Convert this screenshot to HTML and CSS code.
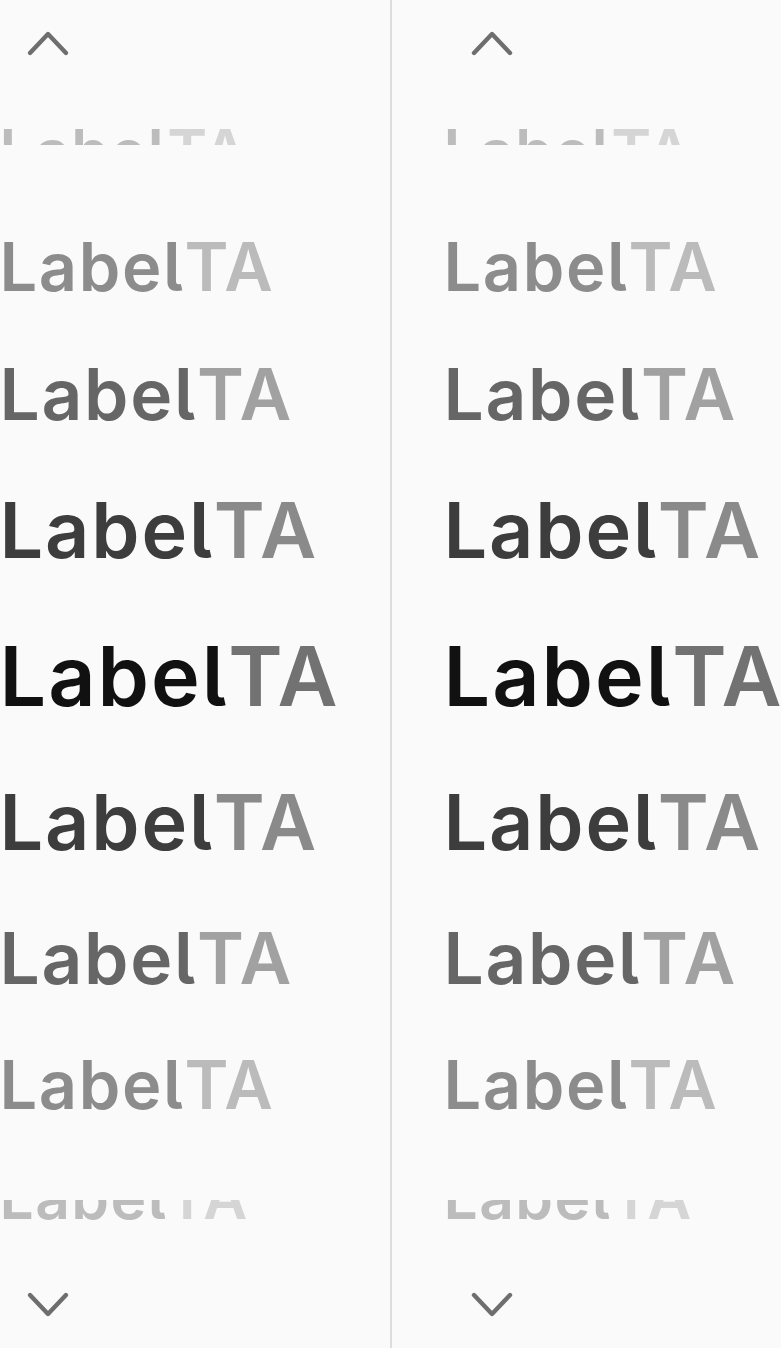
FILE: index.html
```html
<!DOCTYPE html>
<html lang="en">
<head>
<meta charset="utf-8">
<title>Picker</title>
<link rel="stylesheet" href="styles.css">
</head>
<body>
<div class="stage">
  <div class="picker">
    <div class="col">
      <div class="head">
        <svg class="chev" width="44" height="28" viewBox="0 0 44 28"><polyline points="4,23 22,4 40,23"/></svg>
      </div>
      <div class="edge edge-top">
        <div class="row r0">Label<span class="ta">TA</span></div>
      </div>
      <div class="wheel">
        <div class="row r1">Label<span class="ta">TA</span></div>
        <div class="row r2">Label<span class="ta">TA</span></div>
        <div class="row r3">Label<span class="ta">TA</span></div>
        <div class="row r4">Label<span class="ta">TA</span></div>
        <div class="row r3">Label<span class="ta">TA</span></div>
        <div class="row r2">Label<span class="ta">TA</span></div>
        <div class="row r1">Label<span class="ta">TA</span></div>
      </div>
      <div class="edge edge-bottom">
        <div class="row r0">Label<span class="ta">TA</span></div>
      </div>
      <div class="foot">
        <svg class="chev" width="44" height="28" viewBox="0 0 44 28"><polyline points="4,4 22,23 40,4"/></svg>
      </div>
    </div>
    <div class="divider"></div>
    <div class="col">
      <div class="head">
        <svg class="chev" width="44" height="28" viewBox="0 0 44 28"><polyline points="4,23 22,4 40,23"/></svg>
      </div>
      <div class="edge edge-top">
        <div class="row r0">Label<span class="ta">TA</span></div>
      </div>
      <div class="wheel">
        <div class="row r1">Label<span class="ta">TA</span></div>
        <div class="row r2">Label<span class="ta">TA</span></div>
        <div class="row r3">Label<span class="ta">TA</span></div>
        <div class="row r4">Label<span class="ta">TA</span></div>
        <div class="row r3">Label<span class="ta">TA</span></div>
        <div class="row r2">Label<span class="ta">TA</span></div>
        <div class="row r1">Label<span class="ta">TA</span></div>
      </div>
      <div class="edge edge-bottom">
        <div class="row r0">Label<span class="ta">TA</span></div>
      </div>
      <div class="foot">
        <svg class="chev" width="44" height="28" viewBox="0 0 44 28"><polyline points="4,4 22,23 40,4"/></svg>
      </div>
    </div>
  </div>
</div>
</body>
</html>
```
FILE: styles.css
```css
html, body {
  margin: 0;
  padding: 0;
  background: #fafafa;
  overflow: hidden;
}

.stage {
  width: 100vw;
  height: 100vh;
  display: flex;
  justify-content: center;
}

.picker {
  flex: none;
  width: 886px;
  height: 1348px;
  display: flex;
}

.col {
  width: 442px;
  flex: none;
  display: flex;
  flex-direction: column;
  font-family: "Inter", "Noto Sans", sans-serif;
  font-weight: 560;
  font-feature-settings: "cv05" 1;
}

.divider {
  width: 2px;
  flex: none;
  background: #dddddd;
}

.head {
  height: 100px;
  box-sizing: border-box;
  padding: 30px 0 0 78px;
  flex: none;
}

.foot {
  flex: 1;
  box-sizing: border-box;
  padding: 46px 0 0 78px;
}

.chev {
  display: block;
  fill: none;
  stroke: #6e6e6e;
  stroke-width: 4.4;
  stroke-linecap: round;
  stroke-linejoin: round;
}

.edge {
  height: 45px;
  flex: none;
  overflow: hidden;
}

.edge-top .row {
  margin-top: -5px;
}

.edge-bottom .row {
  margin-top: -59px;
}

.wheel {
  height: 1055px;
  flex: none;
  box-sizing: border-box;
  padding-top: 61px;
}

.row {
  padding-left: 52px;
  white-space: nowrap;
  letter-spacing: 0.024em;
}

.r0 { height: 112px; line-height: 112px; font-size: 60.5px; color: #bcbcbc; }
.r0 .ta { color: #d5d5d5; }

.r1 { height: 122px; line-height: 122px; font-size: 66.7px; color: #8c8c8c; }
.r1 .ta { color: #bbbbbb; }

.r2 { height: 132px; line-height: 132px; font-size: 71.2px; color: #666666; }
.r2 .ta { color: #a1a1a1; }

.r3 { height: 140px; line-height: 140px; font-size: 77.3px; color: #3d3d3d; }
.r3 .ta { color: #8a8a8a; }

.r4 { height: 152px; line-height: 152px; font-size: 82.5px; color: #111111; }
.r4 .ta { color: #727272; }
```
